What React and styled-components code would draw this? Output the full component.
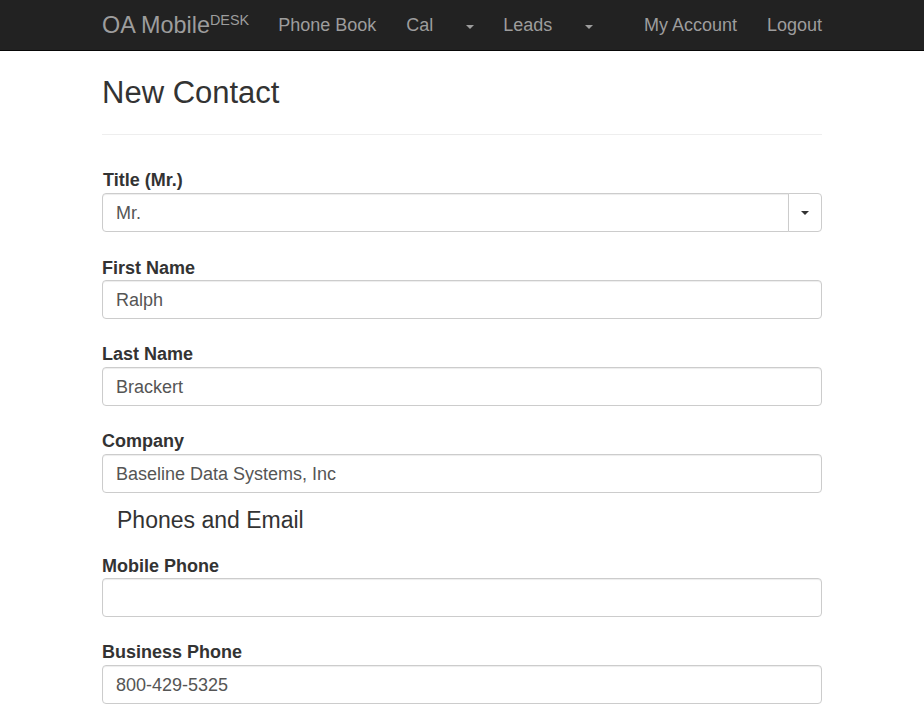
import React from "react";
import styled, { createGlobalStyle } from "styled-components";

const Global = createGlobalStyle`
  html, body { margin: 0; padding: 0; height: 719px; overflow: hidden; background: #fff; }
  body { font-family: "Liberation Sans", Arial, sans-serif; font-size: 18px; line-height: 1.42857; color: #333; }
  * { box-sizing: border-box; }
`;

const Navbar = styled.nav`
  height: 51px;
  background: #222;
  border-bottom: 1px solid #080808;
`;
const NavInner = styled.div`
  width: 750px;
  margin-left: 87px;
  padding: 0 15px;
  height: 50px;
  display: flex;
  align-items: center;
`;
const Brand = styled.a`
  font-size: 23.4px;
  line-height: 50px;
  color: #9d9d9d;
  margin-right: 29px;
  white-space: nowrap;
`;
const Sup = styled.sup`
  font-size: 14.4px;
  line-height: 0;
  position: relative;
  vertical-align: baseline;
  top: -8px;
`;
const NavLink = styled.a`
  font-size: 18px;
  line-height: 50px;
  color: #9d9d9d;
  margin-right: ${p => p.$gap ?? 30}px;
  white-space: nowrap;
`;
const Caret = styled.span`
  display: inline-block;
  width: 0;
  height: 0;
  border-top: 4px solid ${p => p.$color};
  border-left: 4px solid transparent;
  border-right: 4px solid transparent;
`;
const NavCaret = styled(Caret)`
  margin-left: ${p => p.$left}px;
  margin-right: ${p => p.$right}px;
  margin-top: 3px;
`;
const Spacer = styled.div`
  flex: 1;
`;
const Main = styled.main`
  width: 720px;
  margin-left: 102px;
`;
const Header = styled.div`
  padding-top: 24px;
  height: 84px;
  border-bottom: 1px solid #eee;
  margin-bottom: 33px;
`;
const Title = styled.h1`
  margin: 0;
  font-size: 31px;
  font-weight: 400;
  line-height: 36px;
  color: #333;
`;
const Group = styled.div`
  height: ${p => p.$h ?? 87}px;
`;
const Label = styled.label`
  display: block;
  height: 25px;
  padding-top: ${p => p.$drop ?? 0}px;
  font-weight: 700;
  font-size: 18px;
  line-height: 25px;
  color: #333;
  margin-left: ${p => p.$indent ?? 0}px;
`;
const Input = styled.input`
  display: block;
  width: 100%;
  height: 39px;
  padding: 2px 13px 0;
  font: 18px "Liberation Sans", Arial, sans-serif;
  color: #555;
  background: #fff;
  border: 1px solid #ccc;
  border-radius: 4px;
  box-shadow: inset 0 1px 1px rgba(0,0,0,.075);
  outline: none;
`;
const SelectRow = styled.div`
  display: flex;
  height: 39px;
`;
const SelectValue = styled(Input)`
  flex: 1;
  border-radius: 4px 0 0 4px;
`;
const SelectButton = styled.button`
  width: 34px;
  margin-left: -1px;
  background: #fff;
  border: 1px solid #ccc;
  border-radius: 0 4px 4px 0;
  padding: 1px 0 0;
  display: flex;
  align-items: center;
  justify-content: center;
`;
const Section = styled.h3`
  margin: 0 0 0 15px;
  height: 60px;
  font-size: 23px;
  font-weight: 400;
  line-height: 54px;
  color: #333;
`;

const Field = ({ label, value, h, drop }) => (
  <Group $h={h}>
    <Label $drop={drop}>{label}</Label>
    <Input readOnly value={value} />
  </Group>
);

export default function App() {
  return (
    <>
      <Global />
      <Navbar>
        <NavInner>
          <Brand>OA Mobile<Sup>DESK</Sup></Brand>
          <NavLink>Phone Book</NavLink>
          <NavLink $gap={0}>Cal</NavLink>
          <NavCaret $color="#9d9d9d" $left={33} $right={29} />
          <NavLink $gap={0}>Leads</NavLink>
          <NavCaret $color="#9d9d9d" $left={33} $right={0} />
          <Spacer />
          <NavLink>My Account</NavLink>
          <NavLink $gap={0}>Logout</NavLink>
        </NavInner>
      </Navbar>
      <Main>
        <Header><Title>New Contact</Title></Header>
        <Group $h={87}>
          <Label $indent={1}>Title (Mr.)</Label>
          <SelectRow>
            <SelectValue readOnly value="Mr." />
            <SelectButton aria-label="Open"><Caret $color="#333" /></SelectButton>
          </SelectRow>
        </Group>
        <Field label="First Name" value="Ralph" h={87} drop={1} />
        <Field label="Last Name" value="Brackert" h={87} />
        <Field label="Company" value="Baseline Data Systems, Inc" h={64} />
        <Section>Phones and Email</Section>
        <Field label="Mobile Phone" value="" h={87} drop={1} />
        <Field label="Business Phone" value="800-429-5325" h={87} />
      </Main>
    </>
  );
}
